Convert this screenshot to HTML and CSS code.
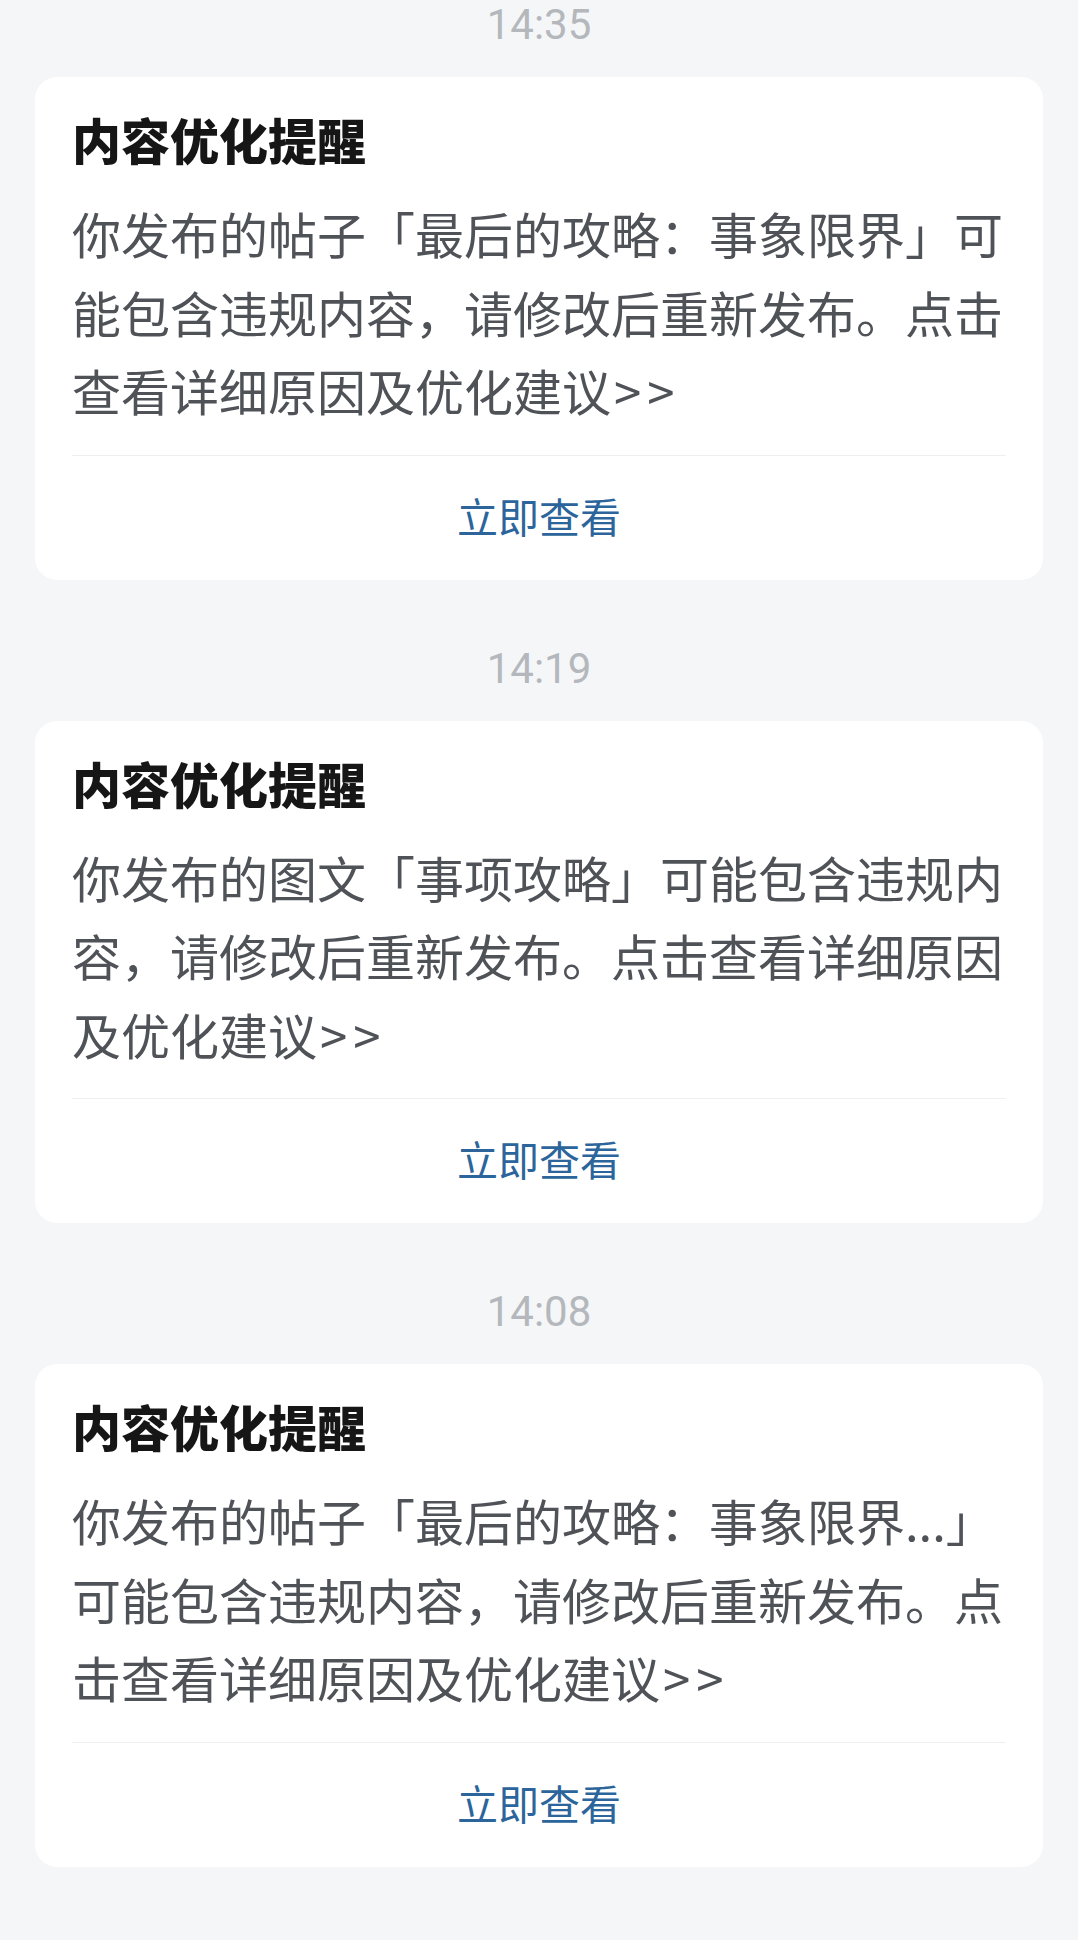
FILE: index.html
```html
<!DOCTYPE html>
<html>
<head>
    <meta charset="utf-8">
    <title>消息通知</title>
    <link rel="stylesheet" href="styles.css">
</head>
<body>
    <div class="list">

        <!-- 14:35 -->
        <div class="notice">
            <div class="time">14:35</div>
            <div class="card">
                <div class="card-title">内容优化提醒</div>
                <p class="card-text">你发布的帖子「最后的攻略：事象限界」可<br>能包含违规内容，请修改后重新发布。点击<br>查看详细原因及优化建议<span class="arrow">&gt;&gt;</span></p>
                <div class="card-action">立即查看</div>
            </div>
        </div>

        <!-- 14:19 -->
        <div class="notice">
            <div class="time">14:19</div>
            <div class="card">
                <div class="card-title">内容优化提醒</div>
                <p class="card-text">你发布的图文「事项攻略」可能包含违规内<br>容，请修改后重新发布。点击查看详细原因<br>及优化建议<span class="arrow">&gt;&gt;</span></p>
                <div class="card-action">立即查看</div>
            </div>
        </div>

        <!-- 14:08 -->
        <div class="notice">
            <div class="time">14:08</div>
            <div class="card">
                <div class="card-title">内容优化提醒</div>
                <p class="card-text">你发布的帖子「最后的攻略：事象限界...」<br>可能包含违规内容，请修改后重新发布。点<br>击查看详细原因及优化建议<span class="arrow">&gt;&gt;</span></p>
                <div class="card-action">立即查看</div>
            </div>
        </div>

    </div>
</body>
</html>
```

FILE: styles.css
```css
/* page background and base font */
body {
    margin: 0;
    background-color: #f5f6f8;
    font-family: "Noto Sans CJK SC", "Noto Sans", sans-serif;
}
.list {
    padding: 0 35px;
    margin-top: -1px;
}
.notice + .notice {
    margin-top: 63px;
}
/* timestamp above each card */
.time {
    text-align: center;
    font-family: Roboto, "Noto Sans", sans-serif;
    font-size: 42px;
    line-height: 52px;
    color: #b4b8bc;
    margin-bottom: 26px;
}
.card {
    background-color: #fff;
    border-radius: 22px;
    padding: 32px 37px 0;
}
.card-title {
    font-size: 49px;
    font-weight: 900;
    line-height: 59px;
    color: #161616;
}
.card-text {
    margin: 26px 0 0;
    font-size: 49px;
    line-height: 78.5px;
    color: #4f5358;
    white-space: nowrap;
}
.arrow {
    margin-left: 3px;
    letter-spacing: 6px;
}
/* bottom link row */
.card-action {
    margin-top: 25px;
    border-top: 1px solid #eeeff1;
    height: 118px;
    padding-bottom: 6px;
    display: flex;
    align-items: center;
    justify-content: center;
    font-size: 41px;
    color: #2b659b;
}
```
